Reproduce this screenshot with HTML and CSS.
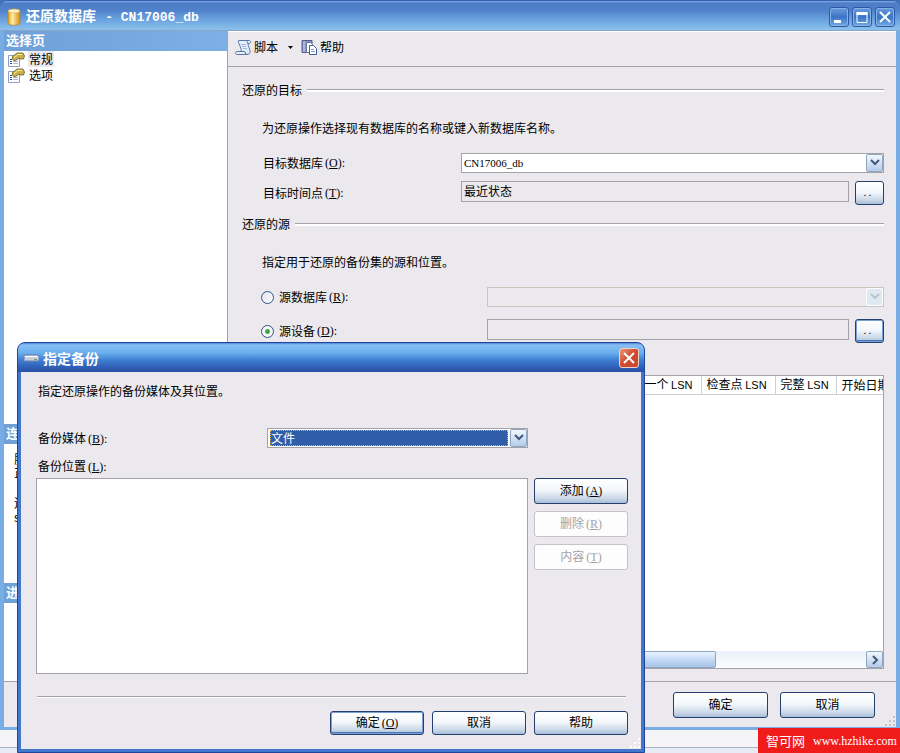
FILE: index.html
```
<!DOCTYPE html>
<html lang="zh-CN">
<head>
  <meta charset="UTF-8">
  <title>还原数据库</title>
  <link rel="stylesheet" href="styles.css">
</head>
<body>

  <div class="window">
    <div class="titlebar">
      <svg class="title-icon" width="16" height="18" viewBox="0 0 16 18">
        <defs>
          <linearGradient id="gold" x1="0" x2="1" y1="0" y2="0">
            <stop offset="0" stop-color="#d89a1c"/>
            <stop offset=".35" stop-color="#fff0a8"/>
            <stop offset="1" stop-color="#d98e10"/>
          </linearGradient>
        </defs>
        <path d="M2 3v12c0 3 12 3 12 0V3z" fill="url(#gold)" stroke="#b57a14" stroke-width=".6"/>
        <ellipse cx="8" cy="3" rx="6" ry="2" fill="#fdf0c0" stroke="#d8a63a" stroke-width=".6"/>
      </svg>
      <h1>还原数据库 <span class="title-en">- CN17006_db</span></h1>
      <div class="win-buttons">
        <button class="win-btn" aria-label="最小化"><svg width="18" height="18"><path d="M4 12h7v3H4z" fill="#fff"/></svg></button>
        <button class="win-btn" aria-label="最大化"><svg width="18" height="18"><path d="M4 14.500V4.500h10v10z" fill="none" stroke="#fff"/><path d="M3.500 4h11v3h-11z" fill="#fff"/></svg></button>
        <button class="win-btn" aria-label="关闭"><svg width="18" height="18"><path d="M4 4l10 10M14 4L4 14" stroke="#fff" stroke-width="2"/></svg></button>
      </div>
    </div>

    <div class="main">
      <div class="sidebar">
        <section class="pages">
          <h2>选择页</h2>
          <ul>
            <li>
              <svg width="17" height="15" viewBox="0 0 17 15"><path d="M.5 3.500h11v11H.5z" fill="#fff" stroke="#8d9fc4"/><path d="M2 7.500h2M2 9.500h2M2 11.500h2" stroke="#33528c"/><path d="M5 7.500h5M5 9.500h5M5 11.500h5" stroke="#a9b8d0"/><path d="M4 5l5-4h6l1.500 3-1 3-3 0-1.500-1-4 3-2-1z" fill="#c9b04c" stroke="#6e6220" stroke-width=".8"/><path d="M9 2.500h5M6 5.500l3-2" stroke="#fbeea0"/></svg>
              <a href="#" class="current">常规</a>
            </li>
            <li>
              <svg width="17" height="15" viewBox="0 0 17 15"><path d="M.5 3.500h11v11H.5z" fill="#fff" stroke="#8d9fc4"/><path d="M2 7.500h2M2 9.500h2M2 11.500h2" stroke="#33528c"/><path d="M5 7.500h5M5 9.500h5M5 11.500h5" stroke="#a9b8d0"/><path d="M4 5l5-4h6l1.500 3-1 3-3 0-1.500-1-4 3-2-1z" fill="#c9b04c" stroke="#6e6220" stroke-width=".8"/><path d="M9 2.500h5M6 5.500l3-2" stroke="#fbeea0"/></svg>
              <a href="#">选项</a>
            </li>
          </ul>
        </section>
        <section class="connection">
          <h2>连接</h2>
          <p>服务器:<br>正</p>
          <p>连接:<br>sa</p>
        </section>
        <section class="progress">
          <h2>进度</h2>
        </section>
      </div>

      <div class="pane">
        <div class="toolbar">
          <button>
            <svg width="17" height="17" viewBox="0 0 17 17"><path d="M4 1.500h10c2 0 2 3 0 3h-1c0 3 2 5 2 8 0 2-1 3-3 3H2c-2 0-2-3 0-3h4c1-2-1-5-2-8-1-2-1-3 0-3z" fill="#e4edfa" stroke="#5a74a8"/><path d="M13 4.500c-1 0-1-2 0-3M2 12.500h7c2 0 1 3 3 3" fill="none" stroke="#5a74a8"/><path d="M6 5.500h5M7 7.500h4M8 9.500h4" stroke="#9eb8df"/></svg>
            脚本
            <svg class="caret" width="5" height="3"><path d="M0 0h5L2.500 3z"/></svg>
          </button>
          <button>
            <svg width="17" height="17" viewBox="0 0 17 17"><path d="M1 1.500h10v12H1z" fill="#8890c0" stroke="#505c92"/><path d="M3 2v11" stroke="#d5daf0"/><path d="M5.500 3.500h4l2 2v8h-6z" fill="#fff" stroke="#6379a8"/><path d="M8.500 6.500h4l3 3v6h-7z" fill="#fff" stroke="#3e5f9a"/><path d="M10 10.500h3M10 12.500h4" stroke="#7c9bcd"/></svg>
            帮助
          </button>
        </div>

        <div class="content">
          <h3 class="group-title">还原的目标</h3>
          <p class="hint">为还原操作选择现有数据库的名称或键入新数据库名称。</p>
          <div class="fields target">
            <label for="db">目标数据库<span class="en">(<u>O</u>):</span></label>
            <div class="combo wide">
              <select id="db" class="db-name"><option>CN17006_db</option></select>
              <span class="arrow"><svg width="10" height="8"><path d="M1 1l4 4 4-4" fill="none" stroke="#42587c" stroke-width="2"/></svg></span>
            </div>
            <label for="time">目标时间点<span class="en">(<u>T</u>):</span></label>
            <input id="time" type="text" value="最近状态" readonly>
            <button class="btn more">. .</button>
          </div>

          <h3 class="group-title">还原的源</h3>
          <p class="hint">指定用于还原的备份集的源和位置。</p>
          <div class="fields source">
            <label><input type="radio" name="src">源数据库<span class="en">(<u>R</u>):</span></label>
            <div class="combo wide disabled">
              <select disabled aria-label="源数据库"></select>
              <span class="arrow"><svg width="10" height="8"><path d="M1 1l4 4 4-4" fill="none" stroke="#b8c4cc" stroke-width="2"/></svg></span>
            </div>
            <label><input type="radio" name="src" checked>源设备<span class="en">(<u>D</u>):</span></label>
            <input type="text" readonly aria-label="源设备">
            <button class="btn more default">. .</button>
          </div>

          <div class="grid-box">
            <table>
              <thead>
                <tr>
                  <th class="col-last">最后一个 <span>LSN</span></th>
                  <th class="col-check">检查点 <span>LSN</span></th>
                  <th class="col-full">完整 <span>LSN</span></th>
                  <th class="col-date">开始日期</th>
                </tr>
              </thead>
            </table>
            <div class="scrollbar">
              <div class="thumb"></div>
              <button class="arrow" aria-label="向右滚动"><svg width="8" height="10"><path d="M2 1l4 4-4 4" fill="none" stroke="#42587c" stroke-width="2"/></svg></button>
            </div>
          </div>
        </div>
      </div>
    </div>

    <div class="footer">
      <button class="btn">确定</button>
      <button class="btn">取消</button>
      <svg class="grip" width="12" height="12"><path d="M9 1h2v2H9zM5 5h2v2H5zM9 5h2v2H9zM1 9h2v2H1zM5 9h2v2H5zM9 9h2v2H9z" fill="#c3c3cb"/></svg>
    </div>
  </div>

  <div class="taskbar"></div>

  <div class="dialog" role="dialog" aria-labelledby="dlg-title">
    <div class="dialog-title">
      <svg width="17" height="8"><path d="M1 1h14l1 2v4H1z" fill="#c9cde0" stroke="#6d7fae"/><path d="M2 2.500h13" stroke="#fff"/><path d="M11 5.500h3" stroke="#5e9d5e"/></svg>
      <h2 id="dlg-title">指定备份</h2>
      <button class="close" aria-label="关闭"><svg width="18" height="18"><path d="M4 4l10 10M14 4L4 14" stroke="#fff" stroke-width="2"/></svg></button>
    </div>
    <div class="dialog-body">
      <p>指定还原操作的备份媒体及其位置。</p>
      <div class="media">
        <label for="media">备份媒体<span class="en">(<u>B</u>):</span></label>
        <div class="combo focused">
          <select id="media"><option>文件</option></select>
          <span class="arrow"><svg width="10" height="8"><path d="M1 1l4 4 4-4" fill="none" stroke="#42587c" stroke-width="2"/></svg></span>
        </div>
      </div>
      <label for="places">备份位置<span class="en">(<u>L</u>):</span></label>
      <div class="places">
        <select id="places" size="8"></select>
        <div class="side-buttons">
          <button class="btn">添加<span class="en">(<u>A</u>)</span></button>
          <button class="btn" disabled>删除<span class="en">(<u>R</u>)</span></button>
          <button class="btn" disabled>内容<span class="en">(<u>T</u>)</span></button>
        </div>
      </div>
      <hr>
      <div class="dialog-footer">
        <button class="btn default">确定<span class="en">(<u>O</u>)</span></button>
        <button class="btn">取消</button>
        <button class="btn">帮助</button>
      </div>
      <svg class="grip" width="12" height="12"><path d="M9 1h2v2H9zM5 5h2v2H5zM9 5h2v2H9zM1 9h2v2H1zM5 9h2v2H5zM9 9h2v2H9z" fill="#fff"/></svg>
    </div>
  </div>

  <div class="watermark">智可网 <span class="en">www.hzhike.com</span></div>

</body>
</html>
```
FILE: styles.css
```
* {
  box-sizing: border-box;
}

body {
  margin: 0;
  height: 100vh;
  display: flex;
  flex-direction: column;
  position: relative;
  overflow: hidden;
  background: #4470b8;
  font: 12px/16px "Noto Sans CJK SC", sans-serif;
  color: #000;
}

h1, h2, h3, p, ul {
  margin: 0;
  padding: 0;
}

button, input, select {
  font: inherit;
  color: inherit;
  margin: 0;
}

/* narrow letters next to the Chinese labels */
.en {
  font-family: "Liberation Serif", serif;
  font-size: 12px;
  line-height: 1;
}

label .en,
.btn .en {
  margin-left: 2px;
}

/* main window */
.window {
  flex: 1;
  min-height: 0;
  display: flex;
  flex-direction: column;
  border: solid #78ace4;
  border-width: 0 4px 3px;
  border-radius: 8px 8px 0 0;
  background: #ebe9ed;
}

.titlebar {
  flex: none;
  height: 31px;
  margin: 0 -4px;
  padding: 2px 5px 0 6px;
  display: flex;
  align-items: center;
  border-radius: 7px 7px 0 0;
  border-top: 1px solid #335fae;
  border-bottom: 1px solid #86a5c8;
  background: linear-gradient(#86b0e8 0, #4f7dc6 2px, #4f80c9 9px, #6ba4e0 19px, #8abfea 28px);
  color: #fff;
}

h1 {
  flex: 1;
  margin-left: 4px;
  font-size: 14px;
  line-height: 20px;
}

.title-en {
  margin-left: 6px;
  font-family: "Liberation Mono", monospace;
  font-size: 13px;
}

.win-buttons {
  display: flex;
  gap: 3px;
}

.win-btn {
  width: 20px;
  height: 20px;
  padding: 0;
  border: 1px solid #2c5aa8;
  border-radius: 3px;
  background: linear-gradient(#6c9bdc, #3a74c6 50%, #73a9e4);
  box-shadow: inset 0 0 0 1px #83b1e8;
}

.win-btn svg,
.close svg {
  display: block;
}

.main {
  flex: 1;
  min-height: 0;
  display: flex;
}

.sidebar {
  width: 223px;
  display: flex;
  flex-direction: column;
  background: #fff;
}

.sidebar h2 {
  height: 20px;
  padding-left: 2px;
  font-size: 13px;
  line-height: 18px;
  color: #fff;
  background: linear-gradient(to right, #6fa0d6, #7db0e4);
}

.sidebar ul {
  list-style: none;
  padding-left: 4px;
}

.sidebar li {
  display: flex;
  align-items: center;
  height: 16px;
  gap: 3px;
}

.sidebar li a {
  padding: 0 1px;
  color: #000;
  text-decoration: none;
}

.sidebar .current {
  background: #ebe9ed;
}

.pages {
  flex: 1;
}

.connection {
  height: 159px;
}

.connection p {
  margin: 8px 0 16px 10px;
  line-height: 14px;
}

.progress {
  height: 98px;
}

.pane {
  flex: 1;
  min-width: 0;
  display: flex;
  flex-direction: column;
  border-left: 1px solid #a3a2a8;
}

.toolbar {
  flex: none;
  height: 36px;
  padding: 0 0 4px 7px;
  display: flex;
  align-items: center;
  gap: 8px;
  border-top: 1px solid #fff;
  border-bottom: 1px solid #a3a2a8;
}

.toolbar button {
  display: flex;
  align-items: center;
  gap: 2px;
  padding: 0;
  border: 0;
  background: none;
}

.toolbar .caret {
  margin-left: 8px;
}

.content {
  flex: 1;
  min-height: 0;
  display: flex;
  flex-direction: column;
  padding: 15px 12px 12px 14px;
}

.group-title {
  display: flex;
  align-items: center;
  gap: 5px;
  font-size: 12px;
  font-weight: normal;
}

.group-title::after {
  content: "";
  flex: 1;
  height: 2px;
  border-top: 1px solid #a3a2a8;
  background: #fff;
}

.hint {
  margin: 22px 0 17px;
  padding-left: 20px;
}

.fields {
  display: grid;
  align-items: center;
  column-gap: 6px;
  padding-left: 20px;
}

.fields label {
  display: flex;
  align-items: center;
}

.target {
  grid-template-columns: 193px 1fr 29px;
  row-gap: 8px;
  margin-bottom: 11px;
}

.target label {
  padding-left: 1px;
}

.source {
  grid-template-columns: 219px 1fr 29px;
  row-gap: 12px;
  margin-bottom: 32px;
}

.wide {
  grid-column: 2 / 4;
}

.fields input[type="text"] {
  width: 100%;
  min-width: 0;
  height: 21px;
  padding: 0 2px 2px;
  align-self: start;
  border: 1px solid #a3a2a8;
  background: #ebe9ed;
  outline: none;
}

.fields input[type="radio"] {
  appearance: none;
  width: 13px;
  height: 13px;
  margin-left: -1px;
  margin-right: 5px;
  border: 1px solid #33527c;
  border-radius: 50%;
  background: linear-gradient(135deg, #dfe3ea, #fff);
}

.fields input[type="radio"]:checked {
  background: radial-gradient(circle, #2f9a2f 0, #4cb04c 2px, #f4f6f8 3px);
}

.combo {
  position: relative;
  height: 20px;
  padding: 1px 19px 1px 1px;
  border: 1px solid #a3a2a8;
  background: #fff;
}

.combo select {
  display: block;
  appearance: none;
  width: 100%;
  height: 16px;
  padding: 0 1px;
  border: 0;
  border-radius: 0;
  background: none;
  outline: none;
}

.combo .db-name {
  font-family: "Liberation Serif", serif;
  font-size: 11px;
}

.arrow {
  display: flex;
  align-items: center;
  justify-content: center;
  border: 1px solid #8fa5c4;
  border-radius: 2px;
  background: linear-gradient(#f3f8fe, #b4cce8);
}

.combo .arrow {
  position: absolute;
  top: 0;
  right: 0;
  bottom: 0;
  width: 17px;
  pointer-events: none;
}

.combo.disabled {
  border-color: #c9c7ba;
  background: #ebe9ed;
}

.disabled .arrow {
  border-color: #fff;
  background: #dfe9f4;
}

.combo.focused {
  padding-left: 2px;
}

.focused select {
  background: #2f5da8;
  color: #fff;
  outline: 1px dotted #e0b040;
  outline-offset: -1px;
}

.btn {
  width: 95px;
  height: 26px;
  padding: 0 0 2px;
  border: 1px solid #25406e;
  border-radius: 3px;
  background: linear-gradient(#fff, #f4f8fb 45%, #ccd9e8 80%, #a9bdd8);
}

.btn.default {
  box-shadow: inset 0 0 0 1px #7ba0d4, inset 0 -2px 0 #4a74b4;
}

.btn:disabled {
  border-color: #c4c3c8;
  background: #fdfdfd;
  color: #a3a2a8;
}

.btn.more {
  width: 29px;
  height: 24px;
  padding: 0 4px 2px 0;
  font-size: 10px;
}

.grid-box {
  flex: 1;
  min-height: 0;
  margin-left: 20px;
  display: flex;
  flex-direction: column;
  justify-content: space-between;
  overflow: hidden;
  border: 1px solid #a3a2a8;
  background: #fff;
}

.grid-box table {
  width: 100%;
  table-layout: fixed;
  border-collapse: collapse;
}

.grid-box th {
  height: 18px;
  padding: 0 0 0 5px;
  overflow: hidden;
  border-right: 1px solid #d0cfd4;
  border-bottom: 1px solid #d0cfd4;
  font-weight: normal;
  text-align: left;
  white-space: nowrap;
}

.grid-box th span {
  font-family: "Liberation Sans", sans-serif;
  font-size: 11px;
}

.grid-box .col-last {
  padding-right: 8px;
  text-align: right;
}

.col-check {
  width: 74px;
}

.col-full {
  width: 61px;
}

.grid-box .col-date {
  width: 47px;
  border-right: 0;
}

.scrollbar {
  height: 17px;
  display: flex;
  justify-content: space-between;
  background: linear-gradient(#eaf1fb, #fbfdff);
}

.thumb {
  width: 73%;
  border: 1px solid #8fa5c4;
  border-radius: 2px;
  background: linear-gradient(#eaf3fe, #bcd5f2 60%, #a8c4e8);
}

.scrollbar .arrow {
  width: 17px;
  padding: 0;
}

.footer {
  flex: none;
  position: relative;
  height: 46px;
  padding: 10px 21px 0 0;
  display: flex;
  justify-content: flex-end;
  gap: 12px;
  border-top: 1px solid #a3a2a8;
}

.grip {
  position: absolute;
  right: 0;
  bottom: 0;
}

/* strip of the desktop under the window */
.taskbar {
  flex: none;
  height: 23px;
  background: linear-gradient(#f5f5f7 17px, #a9b4c4 17px, #a9b4c4 18px, #e6ebf5 18px);
}

/* backup device dialog, floats over the main window */
.dialog {
  position: absolute;
  left: 17px;
  top: 342px;
  width: 628px;
  border: 1px solid #1f459c;
  border-radius: 8px 8px 0 0;
  background: #4277cc;
  padding: 0 3px 3px;
}

.dialog-title {
  height: 29px;
  margin: 0 -3px;
  padding: 1px 5px 0;
  display: flex;
  align-items: center;
  border-radius: 7px 7px 0 0;
  background: linear-gradient(#4a86d8 0, #88c0f4 2px, #6aaeee 10px, #3d7fd2 17px, #2f5cb4 25px, #2850a4);
  color: #fff;
}

.dialog-title h2 {
  flex: 1;
  margin-left: 3px;
  font-size: 14px;
  line-height: 18px;
}

.close {
  width: 20px;
  height: 20px;
  padding: 0;
  border: 1px solid #f0d0c8;
  border-radius: 3px;
  background: linear-gradient(135deg, #e89878, #d0492c 50%, #c84a30);
}

.dialog-body {
  position: relative;
  padding: 11px 13px 14px 15px;
  background: #ebe9ed;
}

.dialog-body p,
.dialog-body label {
  display: block;
  height: 16px;
  padding-left: 2px;
}

.media {
  display: grid;
  grid-template-columns: 231px 261px;
  align-items: center;
  margin: 29px 0 10px;
}

.places {
  display: flex;
  gap: 6px;
  margin-top: 4px;
}

#places {
  flex: 1;
  height: 196px;
  border: 1px solid #a3a2a8;
  border-radius: 0;
  background: #fff;
  outline: none;
}

.side-buttons {
  display: flex;
  flex-direction: column;
  gap: 7px;
}

.dialog .btn {
  width: 94px;
}

hr {
  height: 2px;
  margin: 22px 2px 13px 1px;
  border: 0;
  border-top: 1px solid #a3a2a8;
  background: #fff;
}

.dialog-footer {
  display: flex;
  justify-content: flex-end;
  gap: 8px;
}

.dialog-footer .btn {
  height: 24px;
}

.watermark {
  position: absolute;
  right: 0;
  bottom: 0;
  width: 142px;
  height: 25px;
  padding-left: 8px;
  display: flex;
  align-items: center;
  gap: 8px;
  background: #f01c1c;
  color: #fff;
  font-size: 13px;
}
```
